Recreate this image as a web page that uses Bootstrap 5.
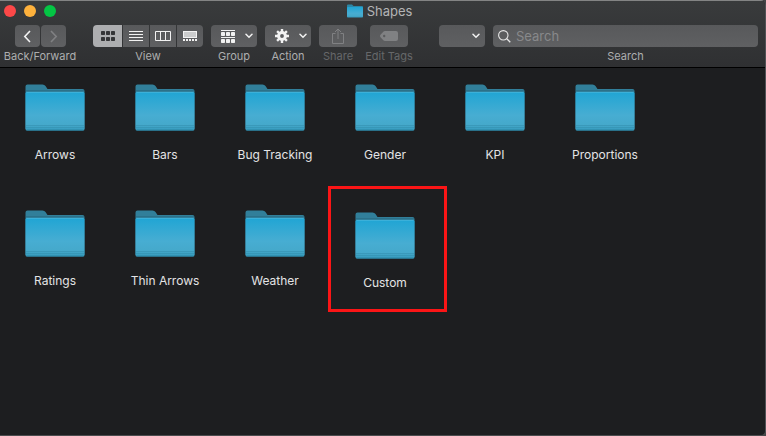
<!DOCTYPE html>
<html lang="en">
<head>
<meta charset="utf-8">
<meta name="viewport" content="width=device-width, initial-scale=1">
<title>Shapes</title>
<link rel="stylesheet" href="https://cdn.jsdelivr.net/npm/bootstrap@5.3.0/dist/css/bootstrap.min.css">
<style>
  body { font-family: Inter, "Liberation Sans", sans-serif; background: #454648; color: #dfdfe0; }
  .finder { background: #1d1e20; border-right: 1px solid #515255; border-bottom: 1px solid #4b4c4e; border-radius: 0 5px 5px 0; overflow: hidden; }
  .finder-head { background: linear-gradient(#393b3c, #2f3032); border-top: 1px solid #838484; border-bottom: 1px solid #000; padding-bottom: 2px; }
  .titlebar { height: 24px; padding-right: 6px; }
  .lights { left: 4px; top: 4px; gap: 8px; }
  .light { width: 12px; height: 12px; border-radius: 50%; }
  .light-close { background: #fc4848; }
  .light-min { background: #fdb13c; }
  .light-zoom { background: #04c544; }
  .window-title { font-size: 13px; height: 20px; line-height: 20px; font-weight: 400; color: #b3b4b5; gap: 4px; }
  .tools { padding: 0 7px 0 4px; }
  .tool-label { font-size: 11px; line-height: 18px; color: #adaeaf; white-space: nowrap; }
  .nav-tools { width: 72px; margin-right: 9px; }
  .tag-tools { width: 48px; }
  .place-tools { margin-left: 18px; }
  .dim .tool-label { color: #66686a; }
  .tool-btn, .tool-btn:disabled { height: 22px; padding: 0; border: 0; border-radius: 4px; background: linear-gradient(#58595b, #5f6062); color: #f2f2f2; opacity: 1; display: flex; align-items: center; justify-content: center; }
  .tool-btn:hover { background: #6a6b6d; color: #fff; }
  .tool-btn:disabled { color: #808183; }
  .tool-btn svg, .window-title svg, .search-box svg, .folder svg { display: block; flex: none; }
  .w-step { width: 25px; }
  .w-view { width: 26px; }
  .w-menu { width: 46px; }
  .w-wide { width: 38px; }
  .steps, .views { gap: 1px; }
  .views .tool-btn.active { width: 29px; background: #adaeb0; color: #343537; }
  .views .tool-btn:not(:first-child) { border-top-left-radius: 0; border-bottom-left-radius: 0; }
  .views .tool-btn:not(:last-child) { border-top-right-radius: 0; border-bottom-right-radius: 0; }
  .menu-btn { gap: 10px; padding-left: 6px; }
  .place-select { width: 46px; height: 22px; padding: 0; border: 0; border-radius: 4px; color: #f2f2f2;
    background: url("data:image/svg+xml,%3Csvg xmlns='http://www.w3.org/2000/svg' viewBox='0 0 8 6'%3E%3Cpath d='M1 1.3l3 3 3-3' fill='none' stroke='%23f2f2f2' stroke-width='1.5' stroke-linecap='round'/%3E%3C/svg%3E") right 5px center / 8px 6px no-repeat, linear-gradient(#58595b, #5f6062); }
  .search-box { height: 22px; border-radius: 4px; background: linear-gradient(#58595b, #5f6062); color: #e6e6e6; padding-left: 5px; gap: 5px; }
  .search-box input, .search-box input:focus { font-size: 13px; line-height: 20px; padding: 0; border: 0; background: transparent; box-shadow: none; color: #fff; }
  .search-box input::placeholder { color: #88898b; opacity: 1; }
  .folders { display: grid; grid-template-columns: repeat(auto-fill, 110px); grid-auto-rows: 126px; padding-top: 16px; }
  .folder { font-size: 12px; line-height: 18px; color: #e4e4e5; gap: 15px; }
  .folder:hover { color: #fff; }
  .folder-marked { padding-top: 2px; }
  .marker { position: absolute; left: -2px; top: -24px; width: 119px; height: 126px; border: 3px solid #fb1516; pointer-events: none; }
</style>
</head>
<body>
<svg class="position-absolute" width="0" height="0" aria-hidden="true">
  <defs>
    <linearGradient id="folder-front" x1="0" y1="0" x2="0" y2="1">
      <stop offset="0" stop-color="#20a5d4"/><stop offset=".6" stop-color="#47add2"/><stop offset=".85" stop-color="#45a9cb"/><stop offset="1" stop-color="#369abd"/>
    </linearGradient>
  </defs>
  <symbol id="folder" viewBox="0 0 60 47">
    <path d="M.5 45V2.500Q.5.5 2.500.5H17.500Q19.500.5 20.500 2L22.500 5H57.500Q59.500 5 59.500 7V45Z" fill="#317f9a"/>
    <path d="M1 6.500H59" stroke="#286980" opacity=".6"/>
    <rect x=".5" y="8" width="59" height="38.500" rx="1.500" fill="url(#folder-front)"/>
    <path d="M1.500 8.500H58.500" stroke="#3bb0d9"/>
    <path d="M1 41.500H59M1 43.500H59" stroke="#338fae" opacity=".55"/>
    <path d="M1.500 46H58.500" stroke="#2b86a5"/>
  </symbol>
  <symbol id="chevron" viewBox="0 0 8 6"><path d="M1 1.300l3 3 3-3" fill="none" stroke="currentColor" stroke-width="1.500" stroke-linecap="round"/></symbol>
</svg>
<div class="finder min-vh-100 d-flex flex-column">
  <header class="finder-head">
    <div class="titlebar position-relative d-flex justify-content-center">
      <div class="lights position-absolute d-flex">
        <button type="button" class="light light-close border-0 p-0" aria-label="Close"></button>
        <button type="button" class="light light-min border-0 p-0" aria-label="Minimize"></button>
        <button type="button" class="light light-zoom border-0 p-0" aria-label="Zoom"></button>
      </div>
      <h1 class="window-title d-flex align-items-center m-0">
        <svg width="16" height="14" viewBox="0 0 16 14"><path d="M0 12V1.500Q0 .5 1 .5H5L6.500 2H15Q16 2 16 3V12Z" fill="#2c87a6"/><rect y="3" width="16" height="10.500" rx=".8" fill="url(#folder-front)"/></svg>
        Shapes
      </h1>
    </div>
    <div class="tools d-flex align-items-start gap-2" role="toolbar" aria-label="Finder">
      <div class="nav-tools d-flex flex-column align-items-center">
        <div class="steps d-flex">
          <button type="button" class="btn tool-btn w-step" aria-label="Back"><svg width="9" height="13" viewBox="0 0 9 13"><path d="M7 1L1.800 6.500 7 12" fill="none" stroke="currentColor" stroke-width="1.600"/></svg></button>
          <button type="button" class="btn tool-btn w-step" aria-label="Forward" disabled><svg width="9" height="13" viewBox="0 0 9 13"><path d="M2 1l5.200 5.500L2 12" fill="none" stroke="currentColor" stroke-width="1.600"/></svg></button>
        </div>
        <span class="tool-label">Back/Forward</span>
      </div>
      <div class="d-flex flex-column align-items-center">
        <div class="views d-flex" role="group" aria-label="View">
          <button type="button" class="btn tool-btn w-view active" aria-label="Icons" aria-pressed="true"><svg width="14" height="10" viewBox="0 0 14 10" fill="currentColor"><rect width="4" height="4" rx=".7"/><rect x="5" width="4" height="4" rx=".7"/><rect x="10" width="4" height="4" rx=".7"/><rect y="6" width="4" height="4" rx=".7"/><rect x="5" y="6" width="4" height="4" rx=".7"/><rect x="10" y="6" width="4" height="4" rx=".7"/></svg></button>
          <button type="button" class="btn tool-btn w-view" aria-label="List"><svg width="14" height="10" viewBox="0 0 14 10"><path d="M0 .5H14M0 3.500H14M0 6.500H14M0 9.500H14" stroke="currentColor"/></svg></button>
          <button type="button" class="btn tool-btn w-view" aria-label="Columns"><svg width="16" height="10" viewBox="0 0 16 10"><path d="M.5.5H15.500V9.500H.5ZM5.500.5V9.500M10.500.5V9.500" fill="none" stroke="currentColor"/></svg></button>
          <button type="button" class="btn tool-btn w-view" aria-label="Gallery"><svg width="14" height="10" viewBox="0 0 14 10"><rect x=".5" y=".5" width="13" height="6" fill="#cbcccd" stroke="currentColor"/><path d="M0 9H14" stroke="currentColor" stroke-width="2" stroke-dasharray="2 1"/></svg></button>
        </div>
        <span class="tool-label">View</span>
      </div>
      <div class="d-flex flex-column align-items-center">
        <button type="button" class="btn tool-btn menu-btn w-menu" aria-label="Group by"><svg width="14" height="13" viewBox="0 0 14 13" fill="currentColor"><path d="M0 0H14V1H0ZM0 7H14V8H0Z"/><rect y="2" width="4" height="4" rx=".7"/><rect x="5" y="2" width="4" height="4" rx=".7"/><rect x="10" y="2" width="4" height="4" rx=".7"/><rect y="9" width="4" height="4" rx=".7"/><rect x="5" y="9" width="4" height="4" rx=".7"/><rect x="10" y="9" width="4" height="4" rx=".7"/></svg><svg width="8" height="6"><use href="#chevron"/></svg></button>
        <span class="tool-label">Group</span>
      </div>
      <div class="d-flex flex-column align-items-center">
        <button type="button" class="btn tool-btn menu-btn w-menu" aria-label="Action menu"><svg width="14" height="14" viewBox="-7 -7 14 14"><circle r="3.400" fill="none" stroke="currentColor" stroke-width="3"/><path d="M0-7V-4M0 7V4M-7 0H-4M7 0H4M-4.900-4.900L-3-3M4.900 4.900L3 3M-4.900 4.900L-3 3M4.900-4.900L3-3" stroke="currentColor" stroke-width="2.400"/></svg><svg width="8" height="6"><use href="#chevron"/></svg></button>
        <span class="tool-label">Action</span>
      </div>
      <div class="dim d-flex flex-column align-items-center">
        <button type="button" class="btn tool-btn w-wide" aria-label="Share" disabled><svg width="12" height="16" viewBox="0 0 12 16"><path d="M3.500 5.500H.5V15.500H11.500V5.500H8.500M6 11V1M3 4L6 1 9 4" fill="none" stroke="currentColor"/></svg></button>
        <span class="tool-label">Share</span>
      </div>
      <div class="dim tag-tools d-flex flex-column align-items-center">
        <button type="button" class="btn tool-btn w-wide" aria-label="Edit Tags" disabled><svg width="18" height="10" viewBox="0 0 18 10"><path d="M5 0H16Q18 0 18 2V8Q18 10 16 10H5Q4 10 3.300 9.300L.5 6.200Q-.4 5 .5 3.800L3.300.7Q4 0 5 0ZM4.200 3.800A1.200 1.200 0 1 0 4.200 6.200 1.200 1.200 0 1 0 4.200 3.800Z" fill="currentColor" fill-rule="evenodd"/></svg></button>
        <span class="tool-label">Edit Tags</span>
      </div>
      <div class="place-tools">
        <select class="form-select place-select" aria-label="Location"><option value=""></option></select>
      </div>
      <div class="flex-fill d-flex flex-column align-items-center">
        <div class="search-box d-flex align-items-center w-100">
          <svg width="13" height="13" viewBox="0 0 13 13"><circle cx="5.300" cy="5.300" r="4.700" fill="none" stroke="currentColor" stroke-width="1.100"/><path d="M8.800 8.800L12.300 12.300" stroke="currentColor" stroke-width="1.300"/></svg>
          <input type="search" id="search" class="form-control" placeholder="Search">
        </div>
        <label for="search" class="tool-label">Search</label>
      </div>
    </div>
  </header>
  <main class="flex-fill">
    <nav class="folders" aria-label="Folders">
      <a href="#" class="folder d-flex flex-column align-items-center text-decoration-none"><svg width="60" height="47"><use href="#folder"/></svg>Arrows</a>
      <a href="#" class="folder d-flex flex-column align-items-center text-decoration-none"><svg width="60" height="47"><use href="#folder"/></svg>Bars</a>
      <a href="#" class="folder d-flex flex-column align-items-center text-decoration-none"><svg width="60" height="47"><use href="#folder"/></svg>Bug Tracking</a>
      <a href="#" class="folder d-flex flex-column align-items-center text-decoration-none"><svg width="60" height="47"><use href="#folder"/></svg>Gender</a>
      <a href="#" class="folder d-flex flex-column align-items-center text-decoration-none"><svg width="60" height="47"><use href="#folder"/></svg>KPI</a>
      <a href="#" class="folder d-flex flex-column align-items-center text-decoration-none"><svg width="60" height="47"><use href="#folder"/></svg>Proportions</a>
      <a href="#" class="folder d-flex flex-column align-items-center text-decoration-none"><svg width="60" height="47"><use href="#folder"/></svg>Ratings</a>
      <a href="#" class="folder d-flex flex-column align-items-center text-decoration-none"><svg width="60" height="47"><use href="#folder"/></svg>Thin Arrows</a>
      <a href="#" class="folder d-flex flex-column align-items-center text-decoration-none"><svg width="60" height="47"><use href="#folder"/></svg>Weather</a>
      <a href="#" class="folder folder-marked position-relative d-flex flex-column align-items-center text-decoration-none"><svg width="60" height="47"><use href="#folder"/></svg>Custom<span class="marker"></span></a>
    </nav>
  </main>
</div>
<script src="https://cdn.jsdelivr.net/npm/bootstrap@5.3.0/dist/js/bootstrap.bundle.min.js"></script>
</body>
</html>
